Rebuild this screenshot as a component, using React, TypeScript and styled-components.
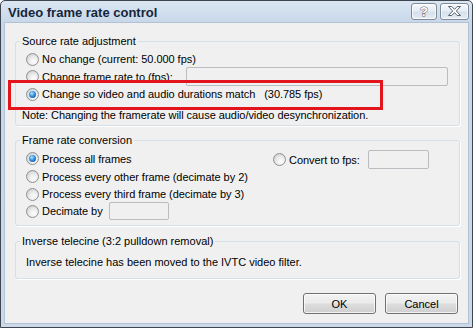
import React from "react";
import styled, { createGlobalStyle, css } from "styled-components";

const GlobalStyle = createGlobalStyle`
  html, body {
    margin: 0;
    padding: 0;
    background: #ffffff;
  }
  body {
    font-family: "Liberation Sans", Arial, sans-serif;
    font-size: 11px;
    color: #000;
  }
`;

const Window = styled.div`
  position: relative;
  width: 473px;
  height: 328px;
  box-sizing: border-box;
  border: 1px solid #3f4650;
  border-radius: 5px 5px 0 0;
  background: linear-gradient(to bottom, #dbe6f2 0px, #c8d8ea 21px, #cbd9e9 100%);
  display: flex;
  flex-direction: column;
`;

const TitleBar = styled.div`
  height: 21px;
  flex: none;
  display: flex;
  justify-content: space-between;
  padding: 0 3px 0 7px;
`;

const Title = styled.div`
  font-weight: bold;
  font-size: 13px;
  line-height: 21px;
  color: #16263a;
  padding-top: 1px;
`;

const CaptionButtons = styled.div`
  display: flex;
  gap: 3px;
  margin-top: 2px;
`;

const CaptionButton = styled.div<{ $w: number }>`
  width: ${({ $w }) => $w}px;
  height: 17px;
  box-sizing: border-box;
  border: 1px solid #7f8b98;
  border-radius: 3px;
  background: linear-gradient(to bottom, #f6f9fc 0%, #e6edf5 48%, #d5e0ec 52%, #e4ecf5 100%);
  box-shadow: inset 0 0 0 1px rgba(255, 255, 255, 0.7);
  display: flex;
  align-items: center;
  justify-content: center;
`;

const Client = styled.div`
  flex: 1;
  margin: 0 3px 3px 3px;
  border: 1px solid #b3c2d2;
  background: #f0f0f0;
  padding: 11px 8px 0 10px;
  display: flex;
  flex-direction: column;
`;

const Group = styled.fieldset<{ $gap?: number; $pb: number }>`
  margin: ${({ $gap }) => $gap ?? 0}px 0 0 0;
  width: 445px;
  box-sizing: border-box;
  border: 1px solid #d5dfe5;
  border-radius: 3px;
  box-shadow: 1px 1px 0 #ffffff;
  padding: 0 11px ${({ $pb }) => $pb}px 10px;
  min-width: 0;
`;

const Legend = styled.legend`
  margin-left: -6px;
  padding: 0 2px;
  line-height: 15px;
  font-size: 11px;
`;

const Rows = styled.div<{ $pt: number }>`
  display: flex;
  flex-direction: column;
  padding-top: ${({ $pt }) => $pt}px;
`;

const Row = styled.div<{ $h: number }>`
  height: ${({ $h }) => $h}px;
  display: flex;
  align-items: center;
`;

const Option = styled.label`
  display: flex;
  align-items: center;
  gap: 3px;
  white-space: nowrap;
  line-height: 14px;
  letter-spacing: -0.05px;
`;

const Radio = styled.span<{ $on?: boolean }>`
  position: relative;
  width: 13px;
  height: 13px;
  flex: none;
  box-sizing: border-box;
  border-radius: 50%;
  border: 1px solid #8d9195;
  background: radial-gradient(circle at 62% 68%, #fdfdfd 0%, #eeeeee 38%, #d2d2d2 80%, #c4c4c4 100%);
  ${({ $on }) =>
    $on &&
    css`
      &::after {
        content: "";
        position: absolute;
        left: 2px;
        top: 2px;
        width: 7px;
        height: 7px;
        border-radius: 50%;
        background: radial-gradient(circle at 40% 35%, #b9e6ff 0%, #3c9be6 40%, #135a9f 80%, #0d3f73 100%);
      }
    `}
`;

const Field = styled.div<{ $w: number; $h: number; $ml?: string }>`
  width: ${({ $w }) => $w}px;
  height: ${({ $h }) => $h}px;
  box-sizing: border-box;
  margin-left: ${({ $ml }) => $ml ?? "0"};
  border: 1px solid #b9bcc0;
  border-radius: 2px;
  background: #f0f0f0;
`;

const Fps = styled.span`
  margin-left: 6px;
`;

const Note = styled.div`
  margin: 6px 0 0 -4px;
  line-height: 14px;
  white-space: nowrap;
  letter-spacing: -0.05px;
`;

const Columns = styled.div`
  display: flex;
`;

const LeftCol = styled(Rows)`
  width: 247px;
`;

const Message = styled.div`
  padding-top: 6px;
  line-height: 14px;
`;

const ButtonRow = styled.div`
  width: 445px;
  margin-top: 14px;
  display: flex;
  justify-content: flex-end;
  gap: 9px;
  padding-right: 2px;
  box-sizing: border-box;
`;

const Button = styled.button`
  width: 73px;
  height: 21px;
  box-sizing: border-box;
  border: 1px solid #707070;
  border-radius: 3px;
  background: linear-gradient(to bottom, #f2f2f2 0%, #ebebeb 48%, #dddddd 52%, #cfcfcf 100%);
  box-shadow: inset 0 0 0 1px rgba(255, 255, 255, 0.75);
  font-family: "Liberation Sans", Arial, sans-serif;
  font-size: 11px;
  color: #000;
  padding: 0;
`;

const Highlight = styled.div`
  position: absolute;
  left: 7px;
  top: 79px;
  width: 375px;
  height: 30px;
  box-sizing: border-box;
  border: 3px solid #e3141c;
  pointer-events: none;
`;

function HelpGlyph() {
  return (
    <svg width="10" height="13" viewBox="0 0 10 13">
      <text
        x="5"
        y="11"
        textAnchor="middle"
        fontFamily="Liberation Sans, Arial, sans-serif"
        fontWeight="bold"
        fontSize="13"
        fill="#ffffff"
        stroke="#5a6675"
        strokeWidth="1"
        paintOrder="stroke"
      >
        ?
      </text>
    </svg>
  );
}

function CloseGlyph() {
  return (
    <svg width="13" height="11" viewBox="0 0 13 11">
      <polygon
        points="0.5,0.5 3.8,0.5 6.5,3.4 9.2,0.5 12.5,0.5 8.3,5 12.5,9.5 9.2,9.5 6.5,6.6 3.8,9.5 0.5,9.5 4.7,5"
        fill="#ffffff"
        stroke="#5a6675"
        strokeWidth="1"
        strokeLinejoin="round"
      />
    </svg>
  );
}

export default function App() {
  return (
    <>
      <GlobalStyle />
      <Window>
        <TitleBar>
          <Title>Video frame rate control</Title>
          <CaptionButtons>
            <CaptionButton $w={26}>
              <HelpGlyph />
            </CaptionButton>
            <CaptionButton $w={29}>
              <CloseGlyph />
            </CaptionButton>
          </CaptionButtons>
        </TitleBar>

        <Client>
          <Group $pb={3}>
            <Legend>Source rate adjustment</Legend>
            <Rows $pt={2}>
              <Row $h={16}>
                <Option>
                  <Radio />
                  No change (current: 50.000 fps)
                </Option>
              </Row>
              <Row $h={19}>
                <Option>
                  <Radio />
                  Change frame rate to (fps):
                </Option>
                <Field $w={262} $h={19} $ml="auto" />
              </Row>
              <Row $h={16}>
                <Option>
                  <Radio $on />
                  Change so video and audio durations match
                  <Fps>(30.785 fps)</Fps>
                </Option>
              </Row>
            </Rows>
            <Note>Note: Changing the framerate will cause audio/video desynchronization.</Note>
          </Group>

          <Group $gap={7} $pb={5}>
            <Legend>Frame rate conversion</Legend>
            <Columns>
              <LeftCol $pt={2}>
                <Row $h={17}>
                  <Option>
                    <Radio $on />
                    Process all frames
                  </Option>
                </Row>
                <Row $h={19}>
                  <Option>
                    <Radio />
                    Process every other frame (decimate by 2)
                  </Option>
                </Row>
                <Row $h={16}>
                  <Option>
                    <Radio />
                    Process every third frame (decimate by 3)
                  </Option>
                </Row>
                <Row $h={18}>
                  <Option>
                    <Radio />
                    Decimate by
                  </Option>
                  <Field $w={60} $h={18} $ml="6px" />
                </Row>
              </LeftCol>
              <Rows $pt={2}>
                <Row $h={19}>
                  <Option>
                    <Radio />
                    Convert to fps:
                  </Option>
                  <Field $w={61} $h={19} $ml="8px" />
                </Row>
              </Rows>
            </Columns>
          </Group>

          <Group $gap={8} $pb={9}>
            <Legend>Inverse telecine (3:2 pulldown removal)</Legend>
            <Message>Inverse telecine has been moved to the IVTC video filter.</Message>
          </Group>

          <ButtonRow>
            <Button>OK</Button>
            <Button>Cancel</Button>
          </ButtonRow>
        </Client>

        <Highlight />
      </Window>
    </>
  );
}
